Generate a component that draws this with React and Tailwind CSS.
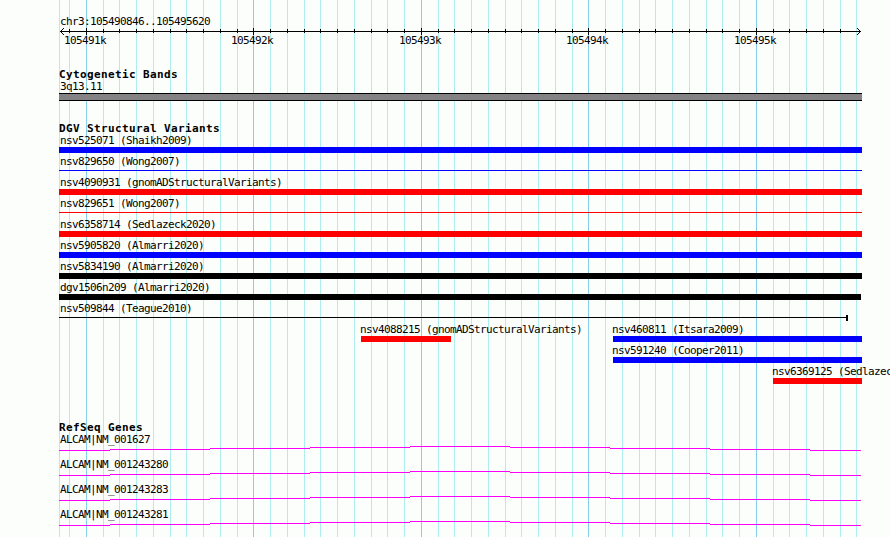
const MINOR = [
  59, 69, 103, 119, 136, 153, 170, 186, 203, 220, 237, 270, 287, 304, 320, 337, 354, 371, 387, 404,
  438, 454, 471, 488, 505, 521, 538, 555, 572, 605, 622, 639, 655, 672, 689, 706, 722, 739, 773,
  789, 806, 823, 840, 856,
];
const MAJOR = [86, 253, 421, 588, 756];

const BLUE = 'bg-[#0000ff]';
const RED = 'bg-[#ff0000]';
const BLACK = 'bg-black';

const VARIANTS = [
  [{ name: 'nsv525071 (Shaikh2009)', color: BLUE }],
  [{ name: 'nsv829650 (Wong2007)', color: BLUE, thin: true }],
  [{ name: 'nsv4090931 (gnomADStructuralVariants)', color: RED }],
  [{ name: 'nsv829651 (Wong2007)', color: RED, thin: true }],
  [{ name: 'nsv6358714 (Sedlazeck2020)', color: RED }],
  [{ name: 'nsv5905820 (Almarri2020)', color: BLUE }],
  [{ name: 'nsv5834190 (Almarri2020)', color: BLACK }],
  [{ name: 'dgv1506n209 (Almarri2020)', color: BLACK, box: 'w-[802px]' }],
  [{ name: 'nsv509844 (Teague2010)', color: BLACK, thin: true, cap: true, box: 'w-[789px]' }],
  [
    { name: 'nsv4088215 (gnomADStructuralVariants)', color: RED, box: 'ml-[302px] w-[90px]', shift: true },
    { name: 'nsv460811 (Itsara2009)', color: BLUE, box: 'ml-[162px] w-[249px]', shift: true },
  ],
  [{ name: 'nsv591240 (Cooper2011)', color: BLUE, box: 'ml-[554px] w-[249px]', shift: true }],
  [{ name: 'nsv6369125 (Sedlazeck2020)', color: RED, box: 'ml-[714px] w-[89px]', shift: true }],
];

const GENES = ['NM_001627', 'NM_001243280', 'NM_001243283', 'NM_001243281'];

// [start, end, row] of each step of the intron arc
const ARC = [
  [0, 51, 4], [51, 151, 3], [151, 251, 2], [251, 351, 1], [351, 451, 0],
  [451, 551, 1], [551, 651, 2], [651, 751, 3], [751, 802, 4],
];

function Grid() {
  return (
    <svg className="absolute inset-0" width="890" height="537" shapeRendering="crispEdges">
      {MINOR.map((x) => <rect key={x} x={x} y="0" width="1" height="537" fill="#afeeee" />)}
      {MAJOR.map((x) => <rect key={x} x={x} y="0" width="1" height="537" fill="#87ceeb" />)}
    </svg>
  );
}

function Label({ children, shift }) {
  return (
    <div className={shift ? 'h-[13px] -ml-px whitespace-nowrap' : 'h-[13px] ml-px whitespace-nowrap'}>
      {children}
    </div>
  );
}

function Heading({ children }) {
  return <h2 className="h-3 font-bold tracking-[0.378px] whitespace-nowrap">{children}</h2>;
}

function Ruler() {
  return (
    <div>
      <svg className="block" width="803" height="7" shapeRendering="crispEdges">
        <rect x="1" y="3" width="801" height="1" />
        {MINOR.filter((x) => x > 60 && x < 856).map((x) => (
          <rect key={x} x={x - 59} y="1" width="1" height="4" />
        ))}
        {MAJOR.map((x) => <rect key={x} x={x - 59} y="0" width="1" height="7" />)}
        <path d="M2 2h1v1h-1zM3 1h1v1h-1zM4 0h1v1h-1zM2 4h1v1h-1zM3 5h1v1h-1zM4 6h1v1h-1z" />
        <path d="M800 2h1v1h-1zM799 1h1v1h-1zM798 0h1v1h-1zM800 4h1v1h-1zM799 5h1v1h-1zM798 6h1v1h-1z" />
      </svg>
      <div className="-mt-px ml-[5px] flex h-[13px]">
        <span className="w-[167px]">105491k</span>
        <span className="w-[168px]">105492k</span>
        <span className="w-[167px]">105493k</span>
        <span className="w-[168px]">105494k</span>
        <span>105495k</span>
      </div>
    </div>
  );
}

function Variant({ name, color, box = 'w-[803px]', thin, cap, shift }) {
  return (
    <div className={`${box} shrink-0`}>
      <Label shift={shift}>{name}</Label>
      <div className="flex h-1.5">
        <div className={`grow ${color} ${thin ? 'mt-0.5 h-px' : 'h-1.5'}`} />
        {cap && <div className="h-1.5 w-0.5 bg-black" />}
      </div>
    </div>
  );
}

function Gene({ name }) {
  return (
    <div className="h-[25px]">
      <Label>ALCAM|{name}</Label>
      <svg className="block" width="803" height="5" fill="#ff00ff" shapeRendering="crispEdges">
        {ARC.map(([a, b, y]) => <rect key={a} x={a} y={y} width={b - a} height="1" />)}
      </svg>
    </div>
  );
}

export default function App() {
  return (
    <main className="relative h-[537px] w-[890px] overflow-hidden bg-[#fcfefc] font-['DejaVu_Sans_Mono',monospace] text-[11px] leading-[13px] tracking-[-0.622px] text-black">
      <Grid />
      <div className="relative pt-[15px] pl-[59px]">
        <Label>chr3:105490846..105495620</Label>
        <Ruler />
        <section className="mt-[21px]">
          <Heading>Cytogenetic Bands</Heading>
          <Label>3q13.11</Label>
          <div className="h-2 w-[803px] border-y border-black bg-[#848284]" />
        </section>
        <section className="mt-[21px]">
          <Heading>DGV Structural Variants</Heading>
          {VARIANTS.map((row) => (
            <div key={row[0].name} className="flex h-[21px]">
              {row.map((v) => <Variant key={v.name} {...v} />)}
            </div>
          ))}
        </section>
        <section className="mt-[35px]">
          <Heading>RefSeq Genes</Heading>
          {GENES.map((g) => <Gene key={g} name={g} />)}
        </section>
      </div>
    </main>
  );
}
